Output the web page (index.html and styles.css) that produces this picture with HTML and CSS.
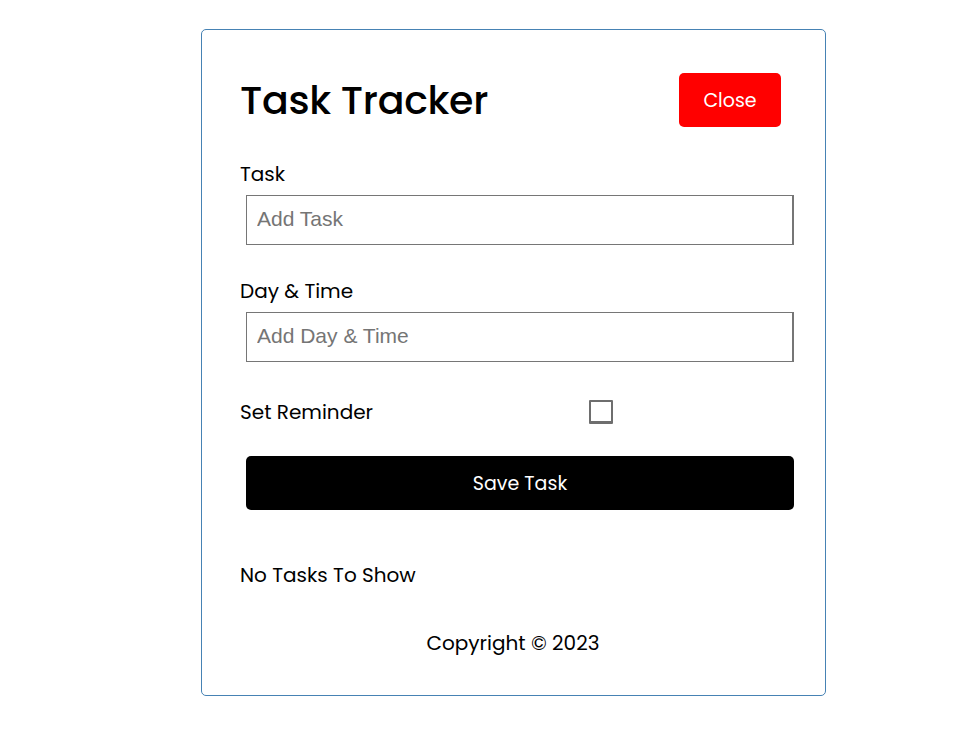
FILE: index.html
```html
<!DOCTYPE html>
<html lang="en">
<head>
    <meta charset="UTF-8">
    <meta name="viewport" content="width=device-width, initial-scale=1.0">
    <title>Task Tracker</title>
    <link rel="stylesheet" href="styles.css">
</head>
<body>
    <div class="container">
        <header class="header">
            <h1>Task Tracker</h1>
            <button class="btn btn-close">Close</button>
        </header>

        <form class="add-form">
            <div class="form-control">
                <label>Task</label>
                <input type="text" placeholder="Add Task">
            </div>
            <div class="form-control">
                <label>Day &amp; Time</label>
                <input type="text" placeholder="Add Day &amp; Time">
            </div>
            <div class="form-control form-control-check">
                <label>Set Reminder</label>
                <span class="check-wrap"><input type="checkbox"></span>
            </div>
            <button type="submit" class="btn btn-block">Save Task</button>
        </form>

        <p class="empty">No Tasks To Show</p>

        <footer class="footer">
            <p>Copyright &copy; 2023</p>
        </footer>
    </div>
</body>
</html>
```

FILE: styles.css
```css
* {
    box-sizing: border-box;
}

body {
    font-family: 'Poppins', 'Inter', 'Noto Sans', sans-serif;
    margin: 0;
    padding: 0;
    background: #fff;
    color: #000;
}

.container {
    width: 625px;
    height: 667px;
    margin: 29px 0 0 201px;
    padding: 43px 44px 0 38px;
    border: 1px solid steelblue;
    border-radius: 5px;
}

.header {
    display: flex;
    justify-content: space-between;
    align-items: center;
    height: 54px;
}

.header h1 {
    margin: 0;
    font-size: 39.5px;
    font-weight: 500;
    letter-spacing: -0.3px;
}

.btn {
    border: none;
    border-radius: 5px;
    color: #fff;
    font-family: inherit;
    font-size: 19px;
    cursor: pointer;
}

.btn-close {
    width: 102px;
    height: 54px;
    background: #ff0000;
}

.add-form {
    margin-top: 34px;
}

.form-control {
    margin-bottom: 33px;
}

.form-control label {
    display: block;
    font-size: 20px;
    line-height: 27px;
}

.form-control input[type="text"] {
    display: block;
    width: 548px;
    height: 50px;
    margin: 7px 0 0 6px;
    padding: 0 10px 3px;
    border: 1px solid #767676;
    border-right-width: 2px;
    font-family: 'Liberation Sans', Arial, sans-serif;
    font-size: 21px;
    outline: none;
}

.form-control input[type="text"]::placeholder {
    color: #757575;
}

.form-control-check {
    display: flex;
    align-items: center;
    height: 28px;
    margin: 36px 0 30px;
}

.form-control-check label {
    flex: 1;
}

.check-wrap {
    flex: 2;
    display: flex;
    justify-content: center;
}

.check-wrap input {
    appearance: none;
    width: 24px;
    height: 24px;
    margin: 0;
    border: 2px solid #6e6e6e;
    border-bottom-width: 3px;
    border-radius: 1px;
    background: #fff;
}

.btn-block {
    display: block;
    width: 548px;
    height: 54px;
    margin-left: 6px;
    background: #000;
}

.empty {
    margin: 52px 0 0;
    font-size: 20px;
    line-height: 27px;
}

.footer {
    margin-top: 41px;
    text-align: center;
    padding-left: 5px;
}

.footer p {
    margin: 0;
    font-size: 20px;
    line-height: 27px;
}
```
